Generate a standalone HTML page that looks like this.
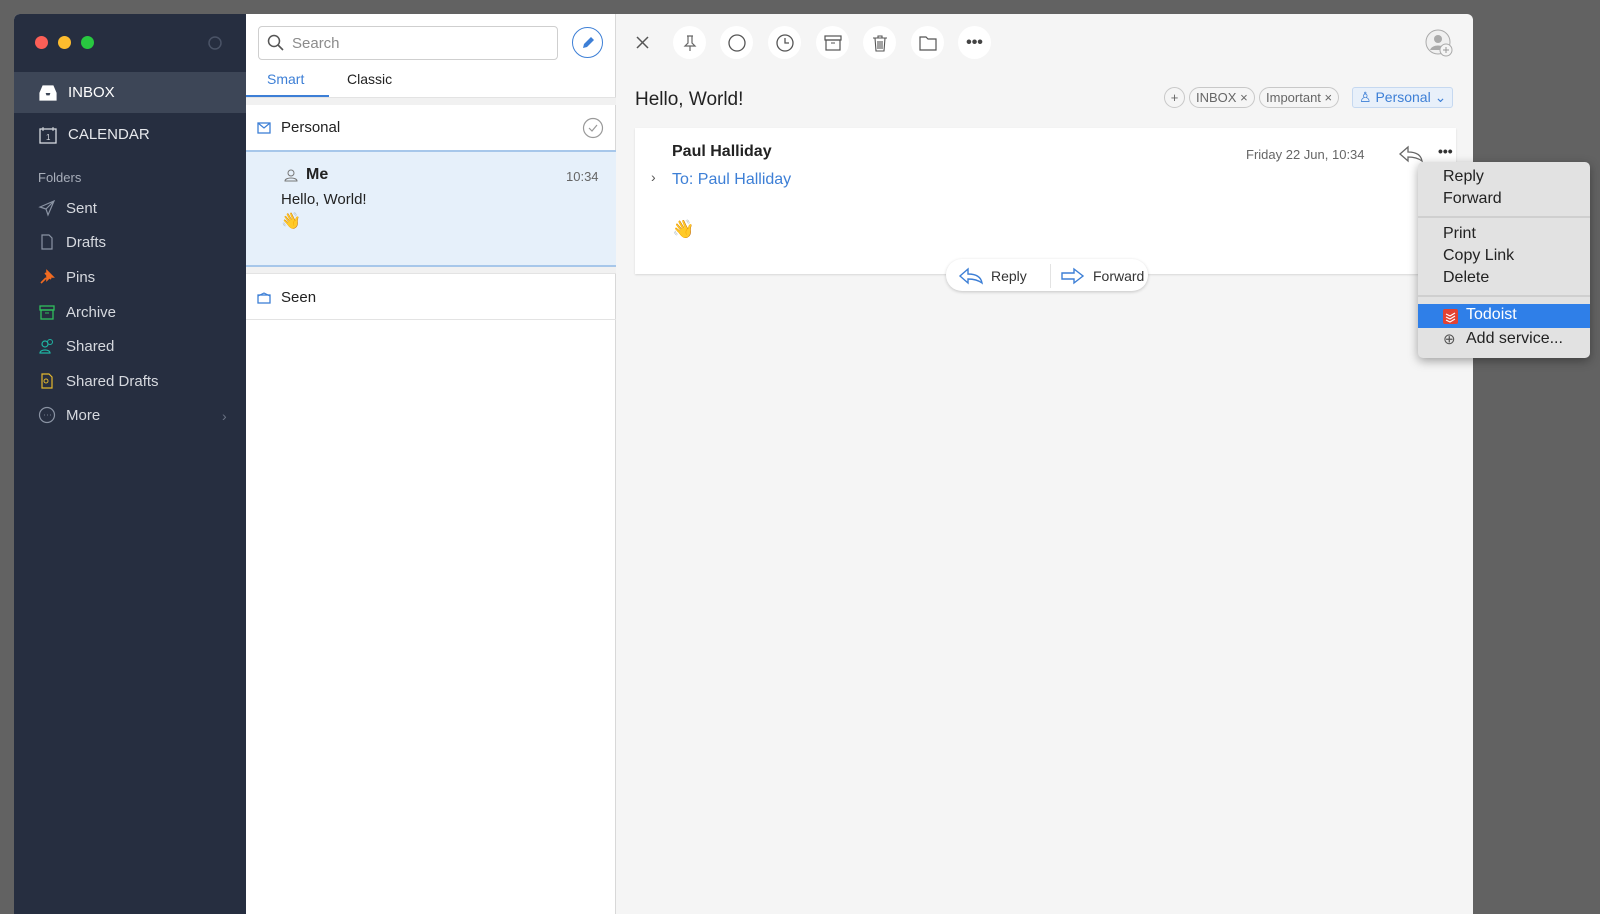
<!DOCTYPE html>
<html><head><meta charset="utf-8"><style>
*{box-sizing:border-box;margin:0;padding:0}
body{width:1600px;height:900px;background:#626262;font-family:"Liberation Sans",sans-serif;position:relative;overflow:hidden}
.abs{position:absolute}
.win{left:14px;top:14px;width:1459px;height:900px;border-radius:6px 6px 0 0;overflow:hidden;background:#f5f5f5}
.side{left:0;top:0;width:232px;height:900px;background:#262e40;color:#e6e8ec}
.dot{width:13px;height:13px;border-radius:50%;top:22px}
.nav{left:0;width:232px;height:41px;font-size:15px;display:flex;align-items:center;padding-left:24px}
.nav span{margin-left:10px}
.fold{left:24px;font-size:15px;color:#d6d9df;display:flex;align-items:center}
.fold svg{margin-right:10px}
.list{left:232px;top:0;width:370px;height:900px;background:#fff;border-right:1px solid #d8d8d8}
.tbtn{width:33px;height:33px;border-radius:50%;background:#fff;top:12px;display:flex;align-items:center;justify-content:center}
.chip{height:21px;border:1px solid #c8c8c8;border-radius:11px;font-size:13px;color:#666;display:flex;align-items:center;padding:0 6px;top:73px}
.menu{left:1418px;top:162px;width:172px;height:196px;background:#e2e2e2;border-radius:5px;box-shadow:0 3px 10px rgba(0,0,0,.35);font-size:16px;color:#222}
.menu div{position:absolute;left:25px}
</style></head><body>
<div class="abs win">
 <div class="abs side">
  <div class="abs dot" style="left:21px;background:#fc5f57"></div>
  <div class="abs dot" style="left:44px;background:#fdbc2e"></div>
  <div class="abs dot" style="left:67px;background:#28c840"></div>
  <svg class="abs" style="left:193px;top:21px" width="16" height="16"><circle cx="8" cy="8" r="6" fill="none" stroke="#4a5366" stroke-width="1.5"/></svg>
  <div class="abs nav" style="top:58px;background:#3d4657;color:#fff"><svg width="20" height="18"><path d="M2 9 L5 2 H15 L18 9 V16 H2Z M2 9H7 L8 12 H12 L13 9 H18" fill="#fff" stroke="#fff" stroke-width="1.2"/></svg><span>INBOX</span></div>
  <div class="abs nav" style="top:100px"><svg width="20" height="20"><rect x="2" y="4" width="16" height="14" fill="none" stroke="#d6d9df" stroke-width="1.3"/><text x="8" y="15" font-size="8" fill="#d6d9df">1</text><path d="M5 2v4M15 2v4" stroke="#d6d9df"/></svg><span>CALENDAR</span></div>
  <div class="abs" style="left:24px;top:156px;font-size:13px;color:#a8aeba">Folders</div>
  <div class="abs fold" style="top:185px"><svg width="18" height="18"><path d="M2 8 L16 2 L10 16 L8 10Z M8 10 L16 2" fill="none" stroke="#8a93a3" stroke-width="1.2"/></svg>Sent</div>
  <div class="abs fold" style="top:219px"><svg width="18" height="18"><path d="M4 2H11L14 5V16H4Z" fill="none" stroke="#8a93a3" stroke-width="1.2"/></svg>Drafts</div>
  <div class="abs fold" style="top:254px"><svg width="18" height="18"><path d="M3 15L8 10M7 5L13 11M9 3L15 9L12 9L9 12L9 6Z" fill="#f26b21" stroke="#f26b21" stroke-width="1.6"/></svg>Pins</div>
  <div class="abs fold" style="top:289px"><svg width="18" height="18"><rect x="2" y="3" width="14" height="4" fill="none" stroke="#2fbf5c" stroke-width="1.3"/><rect x="3" y="7" width="12" height="9" fill="none" stroke="#2fbf5c" stroke-width="1.3"/><path d="M7 10h4" stroke="#2fbf5c"/></svg>Archive</div>
  <div class="abs fold" style="top:323px"><svg width="18" height="18"><circle cx="7" cy="7" r="3" fill="none" stroke="#1fb5a3" stroke-width="1.2"/><circle cx="12" cy="5" r="2.5" fill="none" stroke="#1fb5a3"/><path d="M2 16c0-4 10-4 10 0Z" fill="none" stroke="#1fb5a3" stroke-width="1.2"/></svg>Shared</div>
  <div class="abs fold" style="top:358px"><svg width="18" height="18"><path d="M4 2H11L14 5V16H4Z" fill="none" stroke="#e3b72d" stroke-width="1.2"/><circle cx="8" cy="9" r="2" fill="none" stroke="#e3b72d"/></svg>Shared Drafts</div>
  <div class="abs fold" style="top:392px"><svg width="18" height="18"><circle cx="9" cy="9" r="7.5" fill="none" stroke="#8a93a3" stroke-width="1.2"/><path d="M6 9h.5M9 9h.5M12 9h.5" stroke="#8a93a3" stroke-width="1.5"/></svg>More</div>
  <div class="abs" style="left:208px;top:394px;color:#6b7384;font-size:14px">›</div>
 </div>
 <div class="abs list">
  <div class="abs" style="left:12px;top:12px;width:300px;height:34px;border:1px solid #cfcfcf;border-radius:4px;font-size:15px;color:#8b8b8b;padding:8px 0 0 33px">Search</div>
  <svg class="abs" style="left:21px;top:20px" width="18" height="18"><circle cx="7" cy="7" r="5.5" fill="none" stroke="#555" stroke-width="1.5"/><path d="M11 11l5 5" stroke="#555" stroke-width="1.6"/></svg>
  <div class="abs" style="left:326px;top:13px;width:31px;height:31px;border:1.5px solid #3d7fd6;border-radius:50%"></div>
  <svg class="abs" style="left:333px;top:20px" width="18" height="18"><path d="M4 14L5 10L12 3L15 6L8 13Z" fill="#3d7fd6"/></svg>
  <div class="abs" style="left:21px;top:57px;font-size:14px;color:#3d7fd6">Smart</div>
  <div class="abs" style="left:101px;top:57px;font-size:14px;color:#222">Classic</div>
  <div class="abs" style="left:0;top:81px;width:83px;height:2px;background:#3d7fd6"></div>
  <div class="abs" style="left:0;top:83px;width:370px;height:8px;background:#f1f1f1;border-top:1px solid #e3e3e3"></div>
  <svg class="abs" style="left:11px;top:108px" width="14" height="12"><rect x="1" y="1" width="12" height="10" fill="none" stroke="#3d7fd6" stroke-width="1.3"/><path d="M1 1l6 5 6-5" fill="none" stroke="#3d7fd6" stroke-width="1.2"/></svg>
  <div class="abs" style="left:35px;top:105px;font-size:15px;color:#222">Personal</div>
  <svg class="abs" style="left:336px;top:103px" width="22" height="22"><circle cx="11" cy="11" r="9.5" fill="none" stroke="#999" stroke-width="1.2"/><path d="M7 11l3 3 5-6" fill="none" stroke="#999" stroke-width="1.2"/></svg>
  <div class="abs" style="left:0;top:136px;width:370px;height:117px;background:#e6f0fa;border-top:2px solid #a7c7ea;border-bottom:2px solid #a7c7ea"></div>
  <svg class="abs" style="left:38px;top:154px" width="14" height="14"><circle cx="7" cy="5" r="3" fill="none" stroke="#777"/><path d="M1 13c0-4 12-4 12 0Z" fill="none" stroke="#777"/></svg>
  <div class="abs" style="left:60px;top:152px;font-size:16px;font-weight:bold;color:#222">Me</div>
  <div class="abs" style="left:320px;top:155px;font-size:13px;color:#666">10:34</div>
  <div class="abs" style="left:35px;top:177px;font-size:15px;color:#222">Hello, World!</div>
  <div class="abs" style="left:35px;top:197px;font-size:16px">👋</div>
  <div class="abs" style="left:0;top:253px;width:370px;height:7px;background:#f1f1f1;border-bottom:1px solid #e3e3e3"></div>
  <svg class="abs" style="left:11px;top:278px" width="14" height="12"><rect x="1" y="3" width="12" height="8" fill="none" stroke="#3d7fd6" stroke-width="1.3"/><path d="M1 4l6-3 6 3" fill="none" stroke="#3d7fd6" stroke-width="1.2"/></svg>
  <div class="abs" style="left:35px;top:275px;font-size:15px;color:#222">Seen</div>
  <div class="abs" style="left:0;top:305px;width:370px;height:1px;background:#e3e3e3"></div>
 </div>
 <svg class="abs" style="left:612px;top:12px" width="33" height="33"><path d="M11 11l11 11M22 11l-11 11" stroke="#555" stroke-width="1.5"/></svg>
 <div class="abs tbtn" style="left:659px"><svg width="18" height="18"><path d="M6 2h6M7 2v7l-3 3h10l-3-3V2M9 12v5" fill="none" stroke="#666" stroke-width="1.2"/></svg></div>
 <div class="abs tbtn" style="left:706px"><svg width="20" height="20"><circle cx="10" cy="10" r="8" fill="none" stroke="#555" stroke-width="1.3"/></svg></div>
 <div class="abs tbtn" style="left:754px"><svg width="20" height="20"><circle cx="10" cy="10" r="8" fill="none" stroke="#555" stroke-width="1.3"/><path d="M10 5v5h4" fill="none" stroke="#555" stroke-width="1.3"/></svg></div>
 <div class="abs tbtn" style="left:802px"><svg width="20" height="20"><rect x="2" y="3" width="16" height="4" fill="none" stroke="#555" stroke-width="1.2"/><rect x="3" y="7" width="14" height="10" fill="none" stroke="#555" stroke-width="1.2"/><path d="M8 10h4" stroke="#555"/></svg></div>
 <div class="abs tbtn" style="left:849px"><svg width="20" height="20"><path d="M3 5h14M8 5V3h4v2M5 5l1 13h8l1-13M8 8v8M10 8v8M12 8v8" fill="none" stroke="#555" stroke-width="1.1"/></svg></div>
 <div class="abs tbtn" style="left:897px"><svg width="20" height="20"><path d="M2 4h6l2 2h8v11H2Z" fill="none" stroke="#555" stroke-width="1.2"/></svg></div>
 <div class="abs tbtn" style="left:944px;font-size:16px;color:#444;font-weight:bold">•••</div>
 <svg class="abs" style="left:1410px;top:14px" width="32" height="32"><circle cx="14" cy="14" r="12" fill="#f0f0f0" stroke="#aaa"/><circle cx="14" cy="11" r="4" fill="#aaa"/><path d="M6 22c2-6 14-6 16 0" fill="#aaa"/><circle cx="22" cy="22" r="6" fill="#f5f5f5" stroke="#aaa"/><path d="M22 19v6M19 22h6" stroke="#999"/></svg>
 <div class="abs" style="left:621px;top:75px;font-size:19px;color:#222">Hello, World!</div>
 <div class="abs chip" style="left:1150px;width:21px;padding:0;justify-content:center">+</div>
 <div class="abs chip" style="left:1175px">INBOX ×</div>
 <div class="abs chip" style="left:1245px">Important ×</div>
 <div class="abs chip" style="left:1338px;border-color:#c5d8f0;background:#e8f0fa;color:#3d7fd6;border-radius:3px;font-size:14px">♙ Personal ⌄</div>
 <div class="abs" style="left:621px;top:114px;width:821px;height:146px;background:#fff;box-shadow:0 1px 2px rgba(0,0,0,.12)"></div>
 <div class="abs" style="left:658px;top:129px;font-size:16px;font-weight:bold;color:#222">Paul Halliday</div>
 <div class="abs" style="left:1232px;top:133px;font-size:13px;color:#666">Friday 22 Jun, 10:34</div>
 <svg class="abs" style="left:1384px;top:130px" width="26" height="20"><path d="M10 3L2 10l8 7v-4c6 0 10 1 14 4-1-6-6-9-14-9Z" fill="none" stroke="#666" stroke-width="1.3"/></svg>
 <div class="abs" style="left:1424px;top:129px;font-size:14px;font-weight:bold;color:#333">•••</div>
 <div class="abs" style="left:637px;top:155px;font-size:14px;color:#555">›</div>
 <div class="abs" style="left:658px;top:157px;font-size:16px;color:#3d7fd6">To: Paul Halliday</div>
 <div class="abs" style="left:658px;top:205px;font-size:18px">👋</div>
 <div class="abs" style="left:932px;top:245px;width:202px;height:32px;background:#fff;border-radius:16px;box-shadow:0 1px 3px rgba(0,0,0,.2);font-size:14px;color:#333"></div>
 <svg class="abs" style="left:944px;top:252px" width="26" height="20"><path d="M10 3L2 10l8 7v-4c6 0 10 1 14 4-1-6-6-9-14-9Z" fill="none" stroke="#3d7fd6" stroke-width="1.4"/></svg>
 <div class="abs" style="left:977px;top:254px;font-size:14px;color:#333">Reply</div>
 <div class="abs" style="left:1036px;top:250px;width:1px;height:24px;background:#e3e3e3"></div>
 <svg class="abs" style="left:1046px;top:252px" width="26" height="20"><path d="M14 3l9 7-9 7v-4H2V7h12Z" fill="none" stroke="#3d7fd6" stroke-width="1.4"/></svg>
 <div class="abs" style="left:1079px;top:254px;font-size:14px;color:#333">Forward</div>
</div>
<div class="abs menu">
 <div style="top:6px">Reply</div>
 <div style="top:28px">Forward</div>
 <div style="left:0!important;top:54px;width:172px;height:2px;background:#cfcfcf"></div>
 <div style="top:63px">Print</div>
 <div style="top:85px">Copy Link</div>
 <div style="top:107px">Delete</div>
 <div style="left:0!important;top:133px;width:172px;height:2px;background:#cfcfcf"></div>
 <div style="left:0!important;top:142px;width:172px;height:24px;background:#2f7fe8"></div>
 <svg style="position:absolute;left:25px;top:147px" width="15" height="15"><rect width="15" height="15" rx="2" fill="#e44232"/><path d="M3 5l4 2 5-3M3 8l4 2 5-3M3 11l4 2 5-3" fill="none" stroke="#fff" stroke-width="1.1"/></svg>
 <div style="left:48px;top:144px;color:#fff">Todoist</div>
 <div style="top:168px;font-size:15px;color:#555">⊕</div>
 <div style="left:48px;top:168px">Add service...</div>
</div>
</body></html>
